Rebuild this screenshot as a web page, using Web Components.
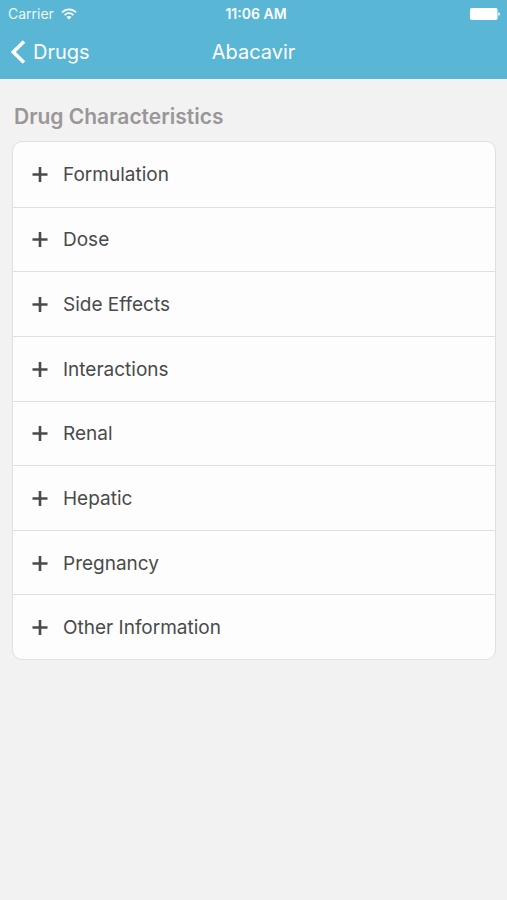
<!DOCTYPE html>
<html lang="en">
<head>
<meta charset="utf-8">
<meta name="viewport" content="width=device-width, initial-scale=1">
<title>Abacavir</title>
<style>
  :root {
    --color-bar: #59b6d4;
    --color-page: #f2f2f2;
    --color-card: #fdfdfd;
    --color-line: #e0e0e0;
    --color-text: #4a4a4a;
    --color-heading: #999797;
  }
  body {
    margin: 0;
    min-height: 100vh;
    background: var(--color-page);
    color: var(--color-text);
    font-family: Inter, "Liberation Sans", sans-serif;
  }
</style>
</head>
<body>
<status-bar carrier="Carrier" time="11:06 AM"></status-bar>
<nav-bar back="Drugs">Abacavir</nav-bar>
<drug-section heading="Drug Characteristics">
  <drug-row>Formulation</drug-row>
  <drug-row>Dose</drug-row>
  <drug-row>Side Effects</drug-row>
  <drug-row>Interactions</drug-row>
  <drug-row>Renal</drug-row>
  <drug-row>Hepatic</drug-row>
  <drug-row>Pregnancy</drug-row>
  <drug-row>Other Information</drug-row>
</drug-section>

<script>
class StatusBar extends HTMLElement {
  constructor() {
    super();
    this.attachShadow({ mode: 'open' });
    this.render();
  }

  render() {
    this.shadowRoot.innerHTML = `
      <style>
        :host {
          display: grid;
          grid-template-columns: 1fr auto 1fr;
          align-items: center;
          box-sizing: border-box;
          height: 28px;
          padding: 0 7px 1px 8px;
          background: var(--color-bar);
          color: #fff;
          font-size: 14px;
          line-height: 16px;
        }
        .carrier {
          display: flex;
          align-items: center;
          gap: 7px;
        }
        .name {
          opacity: .9;
        }
        .time {
          padding-left: 4px;
          font-weight: 600;
        }
        .battery {
          justify-self: end;
        }
        svg {
          display: block;
        }
      </style>
      <div class="carrier">
        <span class="name">${this.getAttribute('carrier')}</span>
        <svg width="16" height="12" viewBox="0 0 16 12" fill="none" stroke="#fff" stroke-width="1.8">
          <path d="M1 4.4C5 .3 11 .3 15 4.4"/>
          <path d="M3.6 7.1c2.6-2.6 6.2-2.6 8.8 0"/>
          <path d="M8 11.6 5.5 9.1c1.5-1.4 3.5-1.4 5 0z" fill="#fff" stroke="none"/>
        </svg>
      </div>
      <span class="time">${this.getAttribute('time')}</span>
      <svg class="battery" width="30" height="12" viewBox="0 0 30 12" fill="#fff">
        <rect width="27.5" height="12" rx="1.8"/>
        <path d="M28.3 4.2c2.2.3 2.2 3.3 0 3.6z"/>
      </svg>
    `;
  }
}

class NavBar extends HTMLElement {
  constructor() {
    super();
    this.attachShadow({ mode: 'open' });
    this.render();
  }

  render() {
    this.shadowRoot.innerHTML = `
      <style>
        :host {
          display: grid;
          grid-template-columns: 1fr auto 1fr;
          align-items: center;
          box-sizing: border-box;
          height: 51px;
          padding: 0 10px 3px;
          background: var(--color-bar);
          color: #fff;
          font-size: 20px;
          line-height: 24px;
        }
        button {
          display: flex;
          align-items: center;
          justify-self: start;
          gap: 7px;
          padding: 0;
          border: 0;
          background: none;
          color: inherit;
          font: inherit;
          cursor: pointer;
        }
        h1 {
          margin: 0;
          font-size: 20px;
          font-weight: 400;
        }
      </style>
      <button type="button">
        <svg width="16" height="24" viewBox="0 0 16 24" fill="none" stroke="#fff" stroke-width="3.6">
          <path d="M14 1.5 3.3 12 14 22.5"/>
        </svg>
        <span>${this.getAttribute('back')}</span>
      </button>
      <h1><slot></slot></h1>
    `;
  }
}

class DrugSection extends HTMLElement {
  constructor() {
    super();
    this.attachShadow({ mode: 'open' });
    this.render();
  }

  render() {
    this.shadowRoot.innerHTML = `
      <style>
        :host {
          display: block;
          padding: 24px 11px 24px 12px;
        }
        h2 {
          margin: 0 0 10px 2px;
          color: var(--color-heading);
          font-size: 21px;
          font-weight: 600;
          line-height: 28px;
        }
        .card {
          display: grid;
          grid-auto-rows: 1fr;
          box-sizing: border-box;
          min-height: 519px;
          border: 1px solid var(--color-line);
          border-radius: 10px;
          background: var(--color-card);
          overflow: hidden;
        }
        ::slotted(:not(:first-child)) {
          border-top: 1px solid var(--color-line);
        }
      </style>
      <h2>${this.getAttribute('heading')}</h2>
      <div class="card"><slot></slot></div>
    `;
  }
}

class DrugRow extends HTMLElement {
  constructor() {
    super();
    this.attachShadow({ mode: 'open' });
    this.render();
  }

  render() {
    this.shadowRoot.innerHTML = `
      <style>
        :host {
          display: grid;
        }
        button {
          display: flex;
          align-items: center;
          gap: 15px;
          width: 100%;
          padding: 18px 19px 16px;
          border: 0;
          background: none;
          color: inherit;
          font: inherit;
          font-size: 19px;
          line-height: 24px;
          text-align: left;
          cursor: pointer;
        }
      </style>
      <button type="button" aria-expanded="false">
        <svg width="16" height="16" viewBox="0 0 16 16" stroke="currentColor" stroke-width="2.6">
          <path d="M.5 7.5h15M8 0v15"/>
        </svg>
        <span><slot></slot></span>
      </button>
    `;
  }

  connectedCallback() {
    const button = this.shadowRoot.querySelector('button');
    button.addEventListener('click', () => {
      const open = button.getAttribute('aria-expanded') === 'true';
      button.setAttribute('aria-expanded', String(!open));
    });
  }
}

window.customElements.define('status-bar', StatusBar);
window.customElements.define('nav-bar', NavBar);
window.customElements.define('drug-section', DrugSection);
window.customElements.define('drug-row', DrugRow);
</script>
</body>
</html>
